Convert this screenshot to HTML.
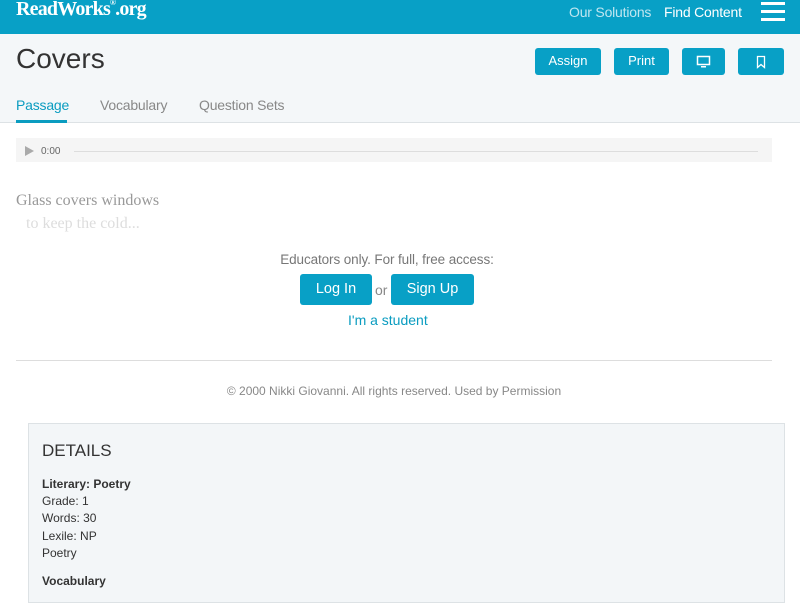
<!DOCTYPE html>
<html><head><meta charset="utf-8"><style>
*{margin:0;padding:0;box-sizing:border-box}
body{width:800px;height:588px;overflow:hidden;background:#fff;font-family:"Liberation Sans",Arial,sans-serif;position:relative}
.abs{position:absolute}
.top{left:0;top:0;width:800px;height:34px;background:#08a0c6}
.logo{left:16px;top:-2px;color:#fff;font-family:"Liberation Serif",serif;font-weight:bold;font-size:20px;letter-spacing:-0.8px}
.nav{top:4px;font-size:14px;letter-spacing:-0.2px}
.hb{left:761px;width:24px;height:3px;background:#fff}
.band{left:0;top:34px;width:800px;height:89px;background:#f4f7f9;border-bottom:1px solid #dde2e5}
h1{position:absolute;left:16px;top:43px;font-weight:normal;font-size:28px;color:#333}
.btn{background:#08a0c6;color:#fff;border-radius:3px;text-align:center;font-size:13px}
.tab{top:97px;font-size:14px;color:#888;letter-spacing:-0.2px}
</style></head><body>
<div class="abs top"></div>
<div class="abs logo">ReadWorks<span style="font-size:8px;vertical-align:top">®</span>.org</div>
<div class="abs nav" style="left:569px;color:#bfe6f0">Our Solutions</div>
<div class="abs nav" style="left:664px;color:#fff">Find Content</div>
<div class="abs hb" style="top:2px"></div><div class="abs hb" style="top:10px"></div><div class="abs hb" style="top:18px"></div>
<div class="abs band"></div>
<h1>Covers</h1>
<div class="abs btn" style="left:535px;top:48px;width:66px;height:27px;line-height:26px">Assign</div>
<div class="abs btn" style="left:614px;top:48px;width:55px;height:27px;line-height:26px">Print</div>
<div class="abs btn" style="left:682px;top:48px;width:43px;height:27px"><svg width="43" height="27"><rect x="15.5" y="8.5" width="12" height="8" fill="none" stroke="#fff" stroke-width="1.5"/><rect x="19" y="18" width="5" height="1.5" fill="#fff"/></svg></div>
<div class="abs btn" style="left:738px;top:48px;width:46px;height:27px"><svg width="46" height="27"><path d="M19.5 8.5h7v11l-3.5-3-3.5 3z" fill="none" stroke="#fff" stroke-width="1.3"/></svg></div>
<div class="abs tab" style="left:16px;color:#0a9cc0">Passage</div>
<div class="abs" style="left:16px;top:120px;width:51px;height:3px;background:#0a9cc0"></div>
<div class="abs tab" style="left:100px">Vocabulary</div>
<div class="abs tab" style="left:199px">Question Sets</div>
<div class="abs" style="left:16px;top:138px;width:756px;height:24px;background:#f5f5f5"></div>
<div class="abs" style="left:25px;top:146px;width:0;height:0;border-left:9px solid #aaa;border-top:5px solid transparent;border-bottom:5px solid transparent"></div>
<div class="abs" style="left:41px;top:146px;font-size:10px;color:#666">0:00</div>
<div class="abs" style="left:74px;top:151px;width:684px;height:1px;background:#ddd"></div>
<div class="abs" style="left:16px;top:192px;font-family:'Liberation Serif',serif;font-size:16px;color:#999">Glass covers windows</div>
<div class="abs" style="left:26px;top:215px;font-family:'Liberation Serif',serif;font-size:16px;color:#ddd">to keep the cold...</div>
<div class="abs" style="left:0;top:252px;width:774px;text-align:center;font-size:13.5px;color:#777;letter-spacing:-0.1px">Educators only. For full, free access:</div>
<div class="abs btn" style="left:300px;top:274px;width:72px;height:31px;line-height:31px;font-size:14.5px">Log In</div>
<div class="abs" style="left:375px;top:282px;font-size:14px;color:#888">or</div>
<div class="abs btn" style="left:391px;top:274px;width:83px;height:31px;line-height:31px;font-size:14.5px">Sign Up</div>
<div class="abs" style="left:348px;top:312px;font-size:14px;color:#0a9cc0">I'm a student</div>
<div class="abs" style="left:16px;top:360px;width:756px;height:1px;background:#ddd"></div>
<div class="abs" style="left:0;top:384px;width:788px;text-align:center;font-size:12px;color:#888">© 2000 Nikki Giovanni. All rights reserved. Used by Permission</div>
<div class="abs" style="left:28px;top:423px;width:757px;height:180px;background:#f3f6f8;border:1px solid #dde2e5"></div>
<div class="abs" style="left:42px;top:441px;font-size:17px;color:#333">DETAILS</div>
<div class="abs" style="left:42px;top:476px;font-size:12px;color:#333;line-height:17.2px"><b>Literary: Poetry</b><br>Grade: 1<br>Words: 30<br>Lexile: NP<br>Poetry</div>
<div class="abs" style="left:42px;top:574px;font-size:12px;color:#333;font-weight:bold">Vocabulary</div>
</body></html>
